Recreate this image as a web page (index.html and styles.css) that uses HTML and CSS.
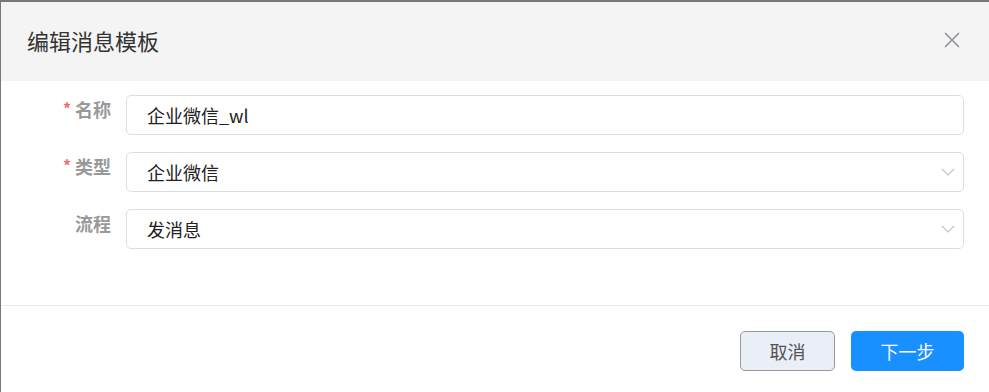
FILE: index.html
```html
<!DOCTYPE html>
<html lang="zh-CN">
<head>
    <meta charset="UTF-8">
    <title>编辑消息模板</title>
    <link rel="stylesheet" href="styles.css">
</head>
<body>
    <div class="dialog">
        <div class="dialog-header">
            <span class="dialog-title">编辑消息模板</span>
            <button type="button" class="close-btn" aria-label="关闭">
                <svg width="16" height="16" viewBox="0 0 16 16"><path d="M1 1 L15 15 M15 1 L1 15" stroke="#909399" stroke-width="1.6" fill="none"/></svg>
            </button>
        </div>

        <!-- form -->
        <div class="dialog-body">
            <div class="form-row">
                <label class="form-label required">名称</label>
                <div class="field">企业微信_wl</div>
            </div>
            <div class="form-row">
                <label class="form-label required">类型</label>
                <div class="field select">企业微信
                    <svg class="arrow" width="14" height="8" viewBox="0 0 14 8"><path d="M1 1 L7 7 L13 1" stroke="#c0c4cc" stroke-width="1.2" fill="none"/></svg>
                </div>
            </div>
            <div class="form-row">
                <label class="form-label">流程</label>
                <div class="field select">发消息
                    <svg class="arrow" width="14" height="8" viewBox="0 0 14 8"><path d="M1 1 L7 7 L13 1" stroke="#c0c4cc" stroke-width="1.2" fill="none"/></svg>
                </div>
            </div>
        </div>

        <div class="dialog-footer">
            <button type="button" class="btn cancel-btn">取消</button>
            <button type="button" class="btn next-btn">下一步</button>
        </div>
    </div>
</body>
</html>
```

FILE: styles.css
```css
body {
    margin: 0;
    font-family: "Noto Sans CJK SC", "Noto Sans", sans-serif;
    background-color: #fff;
}

.dialog {
    height: 392px;
    box-sizing: border-box;
    border-top: 2px solid #787878;
    border-left: 1px solid #787878;
    background-color: #fff;
}

.dialog-header {
    height: 79px;
    box-sizing: border-box;
    background-color: #f4f4f4;
    display: flex;
    align-items: center;
    justify-content: space-between;
    padding: 0 29px 4px 26px;
}

.dialog-title {
    font-size: 22px;
    color: #333;
}

.close-btn {
    background: none;
    border: none;
    padding: 0;
    width: 16px;
    height: 16px;
    cursor: pointer;
    display: flex;
}

.dialog-body {
    padding: 14px 25px 56px 0;
    border-bottom: 1px solid #ebebeb;
    display: flex;
    flex-direction: column;
    gap: 17px;
}

.form-row {
    display: flex;
    align-items: center;
}

.form-label {
    width: 110px;
    padding-right: 15px;
    text-align: right;
    font-size: 18px;
    font-weight: bold;
    color: #999;
    margin-top: -12px;
}

.form-label.required::before {
    content: "*";
    color: #f56c6c;
    font-size: 16px;
    margin-right: 4px;
    vertical-align: 2px;
}

.field {
    flex: 1;
    height: 40px;
    box-sizing: border-box;
    border: 1px solid #dcdfe6;
    border-radius: 5px;
    padding: 0 20px;
    display: flex;
    align-items: center;
    font-size: 18px;
    color: #222;
}

.field.select {
    justify-content: space-between;
    padding-right: 8px;
}

.arrow {
    flex-shrink: 0;
}

.dialog-footer {
    display: flex;
    justify-content: flex-end;
    gap: 16px;
    padding: 25px 25px 0 0;
}

.btn {
    height: 40px;
    border-radius: 5px;
    font-family: inherit;
    font-size: 18px;
    cursor: pointer;
}

.cancel-btn {
    width: 95px;
    background-color: #eaeef6;
    border: 1px solid #999;
    color: #555;
}

.next-btn {
    width: 113px;
    background-color: #1890ff;
    border: none;
    color: #fff;
}
```
